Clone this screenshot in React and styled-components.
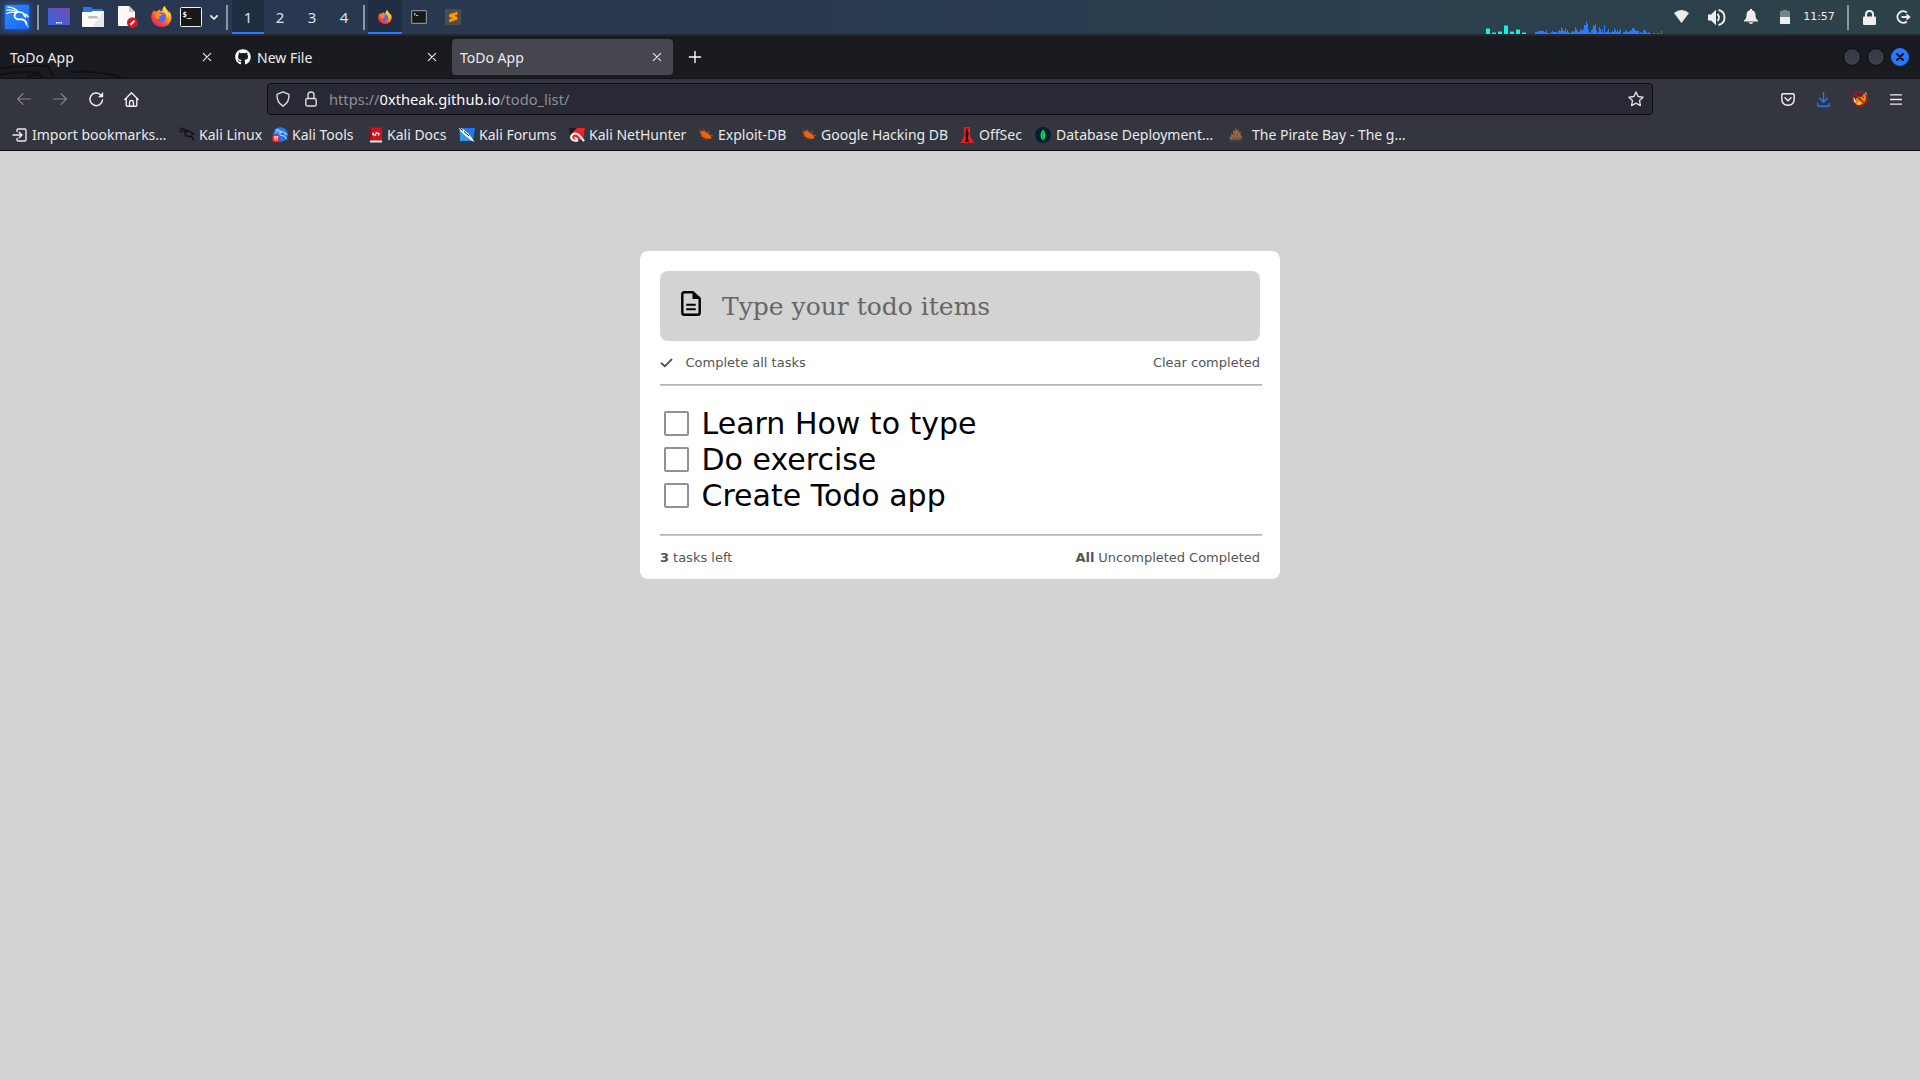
import React from 'react';
import styled, { createGlobalStyle } from 'styled-components';
import { SiSublimetext } from 'react-icons/si';
import { FaGithub } from 'react-icons/fa';

const GlobalStyle = createGlobalStyle`
  * { box-sizing: border-box; }
  body {
    margin: 0;
    background: #d3d3d3;
    overflow: hidden;
    font-family: "Noto Sans", sans-serif;
  }
  svg { display: block; overflow: visible; }
`;

const Screen = styled.div`
  display: flex;
  flex-direction: column;
  width: 1920px;
  height: 1080px;
`;

/* ---------- desktop panel ---------- */

const Panel = styled.header`
  display: flex;
  align-items: center;
  justify-content: space-between;
  height: 34px;
  flex: none;
  background: linear-gradient(90deg, #28374f 0%, #28394f 40%, #2b3f4d 75%, #2e4249 100%);
`;

const PanelGroup = styled.div`
  display: flex;
  align-items: center;
  height: 34px;
`;

const Slot = styled.div`
  display: flex;
  align-items: center;
  justify-content: center;
  flex: none;
  width: ${(p) => p.$w}px;
  height: 100%;
  padding-bottom: ${(p) => p.$lift || 0}px;
  color: #eeeeec;
`;

const Separator = styled.div`
  flex: none;
  width: 2px;
  height: 25px;
  background: #8e96a1;
`;

const KaliTile = styled.div`
  display: flex;
  align-items: center;
  justify-content: center;
  width: 24px;
  height: 24px;
  background: linear-gradient(140deg, #2190ff, #1f66ff);
  box-shadow: 0 0 5px 1px rgba(39, 119, 255, 0.65);
`;

const Workspace = styled.div`
  display: flex;
  align-items: center;
  justify-content: center;
  flex: none;
  width: ${(p) => p.$w || 32}px;
  height: 34px;
  padding-top: 1px;
  font-size: 15px;
  color: #dfe2e6;
  background: ${(p) => (p.$active ? '#202e41' : 'transparent')};
  border-bottom: 2px solid ${(p) => (p.$active ? '#277bff' : 'transparent')};
`;

const Graph = styled.div`
  display: flex;
  align-items: flex-end;
  gap: ${(p) => p.$gap}px;
  width: ${(p) => p.$w}px;
  height: 34px;
  margin-right: ${(p) => p.$after}px;
`;

const Bar = styled.div`
  flex: none;
  width: ${(p) => p.$w}px;
  background: ${(p) => p.$color};
  border-top: ${(p) => (p.$cap ? '1px solid #188f94' : '0')};
`;

const Clock = styled.div`
  font: 11px "DejaVu Sans", sans-serif;
  color: #eeeeec;
  padding-bottom: 2px;
`;

/* ---------- browser chrome ---------- */

const TabBar = styled.div`
  position: relative;
  display: flex;
  align-items: center;
  justify-content: space-between;
  flex: none;
  height: 45px;
  padding-bottom: 1px;
  background: #1a1b20;
  border-top: 2px solid #26282e;
  border-bottom: 1px solid #121318;
`;

const Watermark = styled.div`
  position: absolute;
  left: 0;
  bottom: 0;
`;

const TabStrip = styled.div`
  position: relative;
  display: flex;
  align-items: center;
`;

const Tab = styled.div`
  display: flex;
  align-items: center;
  width: ${(p) => p.$w}px;
  height: 36px;
  margin-right: ${(p) => p.$after}px;
  padding: 0 ${(p) => p.$end || 11}px 0 ${(p) => p.$pad}px;
  gap: 6px;
  border-radius: 4px;
  color: #ececee;
  font-size: 14px;
  background: ${(p) => (p.$active ? '#46464f' : 'transparent')};
`;

const TabLabel = styled.span`
  flex: 1;
  padding-top: 1px;
  white-space: nowrap;
`;

const WindowControls = styled.div`
  display: flex;
  gap: 6px;
  margin-right: 11px;
`;

const WindowButton = styled.div`
  display: flex;
  align-items: center;
  justify-content: center;
  width: 18px;
  height: 18px;
  border-radius: 50%;
  background: ${(p) => (p.$close ? '#2777ff' : 'linear-gradient(#343945, #3b404d)')};
  border: 1px solid ${(p) => (p.$close ? '#2777ff' : '#07080b')};
`;

const NavBar = styled.div`
  display: flex;
  align-items: center;
  flex: none;
  height: 40px;
  background: #33353f;
`;

const UrlBar = styled.div`
  display: flex;
  align-items: center;
  flex: none;
  width: 1386px;
  height: 32px;
  border: 1px solid #0d0e13;
  border-radius: 4px;
  background: #282934;
`;

const UrlText = styled.div`
  flex: 1;
  font-size: 14.67px;
  color: #8e8f97;
  white-space: nowrap;
  b { font-weight: 400; color: #fbfbfe; }
`;

const BookmarkBar = styled.div`
  display: flex;
  align-items: center;
  flex: none;
  height: 32px;
  padding-left: 11px;
  background: #33353f;
  border-bottom: 1px solid #0d0e13;
`;

const Bookmark = styled.div`
  display: flex;
  align-items: center;
  flex: none;
  width: ${(p) => p.$w}px;
  gap: ${(p) => p.$gap || 5}px;
  font-size: 14px;
  line-height: 20px;
  color: #e8e8ea;
  white-space: nowrap;
`;

/* ---------- todo page ---------- */

const Page = styled.main`
  flex: 1;
  display: flex;
  justify-content: center;
  align-items: flex-start;
  padding-top: 100px;
  background: #d3d3d3;
  font-family: "DejaVu Sans", sans-serif;
`;

const Card = styled.section`
  display: flex;
  flex-direction: column;
  width: 640px;
  height: 328px;
  padding: 20px;
  border-radius: 8px;
  background: #fff;
`;

const TodoInput = styled.div`
  display: flex;
  align-items: center;
  flex: none;
  height: 70px;
  padding-left: 21px;
  gap: 21px;
  border-radius: 8px;
  background: #d3d3d3;
`;

const Placeholder = styled.span`
  font: 25px "DejaVu Serif", serif;
  color: #666;
  padding-top: 1px;
`;

const DocIcon = styled.div`
  padding-bottom: 5px;
`;

const Row = styled.div`
  display: flex;
  align-items: center;
  justify-content: space-between;
  flex: none;
  height: 43px;
  font-size: 13px;
  color: #555;
`;

const RowGroup = styled.div`
  display: flex;
  align-items: center;
  gap: ${(p) => p.$gap}px;
`;

const Rule = styled.div`
  flex: none;
  width: 602px;
  height: 2px;
  border-top: 1px solid #b5b5b5;
  border-bottom: 1px solid #c9c9c9;
`;

const TodoList = styled.div`
  flex: none;
  height: 148px;
  padding: 20px 0 0 4px;
`;

const Todo = styled.div`
  display: flex;
  align-items: flex-start;
  gap: 12.5px;
  height: 36px;
  font-size: 30px;
  line-height: 36px;
  color: #000;
  white-space: nowrap;
`;

const Checkbox = styled.div`
  width: 25px;
  height: 25px;
  margin-top: 5px;
  border: 2px solid #8f8f9d;
  border-radius: 2px;
  background: #fff;
`;

/* ---------- icons ---------- */

const Line = ({ w = 16, h = 16, sw = 1.3, children, color = 'currentColor' }) => (
  <svg width={w} height={h} viewBox={`0 0 ${w} ${h}`} fill="none" stroke={color}
    strokeWidth={sw} strokeLinecap="round" strokeLinejoin="round">{children}</svg>
);

const Dragon = ({ size, color, ...rest }) => (
  <svg width={size} height={size} viewBox="0 0 24 24" fill="none" stroke={color}
    strokeLinecap="round" strokeLinejoin="round" {...rest}>
    <path d="M2 1.200Q8.500 1.200 13 6.200M1 4.300Q7 3 12.300 6.500M1 7.800Q5 5.300 10 7" strokeWidth="1.300" />
    <path d="M12 6.300Q8 8.500 9.200 11.500 10.500 14.300 15.500 13.800 20.500 14 21.300 18.500" strokeWidth="1.900" />
    <path d="M21.300 18.300Q21.500 20.500 23 21.800" strokeWidth="1" />
    <path d="M12 6.300Q16.500 5.800 18.800 8.300 21.800 8.700 23 11.200M18.500 8.800Q18.500 10.500 20.500 11.500" strokeWidth="1.600" />
  </svg>
);

const DesktopIcon = () => (
  <svg width="22" height="17" viewBox="0 0 22 17">
    <defs>
      <linearGradient id="desk" x1="0" y1="1" x2="1" y2="0">
        <stop offset="0" stopColor="#2d68de" /><stop offset="1" stopColor="#7d49b2" />
      </linearGradient>
    </defs>
    <rect width="22" height="17" rx=".6" fill="url(#desk)" />
    <path d="M8 14h1.500v1.500H8zM10.300 14h1.500v1.500h-1.500zM12.600 14h1.500v1.500h-1.500z" fill="#fff" />
  </svg>
);

const FolderIcon = () => (
  <svg width="22" height="20" viewBox="0 0 22 20">
    <path d="M1 1q0-1 1-1h7l2 2h9q1 0 1 1v5H1z" fill="#2a74e8" />
    <path d="M0 5h9l2-1h11v15q0 1-1 1H1q-1 0-1-1z" fill="#fafafa" />
    <path d="M22 4v15q0 1-1 1H10z" fill="#e9e9e9" />
    <rect x="6" y="9" width="10" height="2.400" rx="1.200" fill="#bdbdbd" />
  </svg>
);

const DocBlockedIcon = () => (
  <svg width="20" height="22" viewBox="0 0 20 22">
    <path d="M0 1q0-1 1-1h10l6 6v13q0 1-1 1H1q-1 0-1-1z" fill="#fafafa" />
    <path d="M11 0l6 6h-6z" fill="#c9c9c9" />
    <circle cx="14.500" cy="16.700" r="5.500" fill="#d41920" />
    <path d="M12.500 18.700l4-4" stroke="#fff" strokeWidth="2" />
  </svg>
);

const FirefoxIcon = ({ size, id }) => (
  <svg width={size} height={size} viewBox="0 0 21 21">
    <defs>
      <linearGradient id={`${id}a`} x1=".85" y1=".1" x2=".2" y2=".95">
        <stop offset="0" stopColor="#fff044" /><stop offset=".35" stopColor="#ffa02c" />
        <stop offset=".65" stopColor="#ff5038" /><stop offset="1" stopColor="#e62160" />
      </linearGradient>
      <linearGradient id={`${id}b`} x1="0" y1="0" x2="0" y2="1">
        <stop offset="0" stopColor="#7a5be0" /><stop offset="1" stopColor="#2f7bf0" />
      </linearGradient>
    </defs>
    <path d="M3.2 4Q3.400 5.300 4 5.700Q5.200 5 6.800 5Q7.800 3.600 9.500 3.500Q8.700 5 9.500 5.600Q12 4.500 11.700 2.500Q12.200 .6 14 0Q14.200 2.300 16.500 4.200Q17.500 5 18 7L18.300 5.600Q20.800 8 20.500 12Q19.500 20.500 10.700 21Q1 20.500 .2 11.500Q.2 7 3.200 4z" fill={`url(#${id}a)`} />
    <circle cx="10.500" cy="11.200" r="4.800" fill={`url(#${id}b)`} />
    <path d="M4 7.500Q6 6 8.500 7.300L11.500 8.300Q11 9.800 8.700 10Q8 11.500 8.300 12.800Q6 13.500 4.800 12Q3.500 9.500 4 7.500z" fill="#ff8a1e" />
    <path d="M12 4.500Q16.500 7.500 15.500 12.500Q18 10 16.500 6.200Q14 4 14 2z" fill="#ffd83a" opacity=".85" />
  </svg>
);

const TerminalIcon = () => (
  <svg width="22" height="20" viewBox="0 0 22 20">
    <rect x=".5" y=".5" width="21" height="19" rx="1" fill="#17181a" stroke="#f0f0f0" />
    <text x="2.500" y="9.500" fontFamily="DejaVu Sans Mono, monospace" fontWeight="700" fontSize="7.5" fill="#fff">$_</text>
  </svg>
);

const TerminalTaskIcon = () => (
  <svg width="16" height="14" viewBox="0 0 16 14">
    <rect x=".6" y=".6" width="14.800" height="12.800" rx="1" fill="#17181a" stroke="#8c8c8c" strokeWidth="1.200" />
    <path d="M3 3l1.500 1.200L3 5.400M5.200 5.500h2" stroke="#eee" strokeWidth=".9" fill="none" />
  </svg>
);

const SublimeIcon = () => (
  <svg width="16" height="16" viewBox="0 0 16 16">
    <rect width="16" height="16" rx="1" fill="#4d4d4d" />
    <SiSublimetext x="3" y="2.800" size={10.5} color="#ff9800" />
  </svg>
);

const WifiIcon = () => (
  <svg width="15" height="13" viewBox="0 0 15 13"><path d="M0 3Q7.500-3 15 3L7.500 13z" fill="#eeeeec" /></svg>
);

const SpeakerIcon = () => (
  <svg width="18" height="17" viewBox="0 0 18 17">
    <path d="M0 5.500h3L8 .7v15.600L3 11.500H0z" fill="#eeeeec" />
    <path d="M9.500 5q3.200 3.500 0 7" stroke="#eeeeec" strokeWidth="1.900" fill="none" />
    <path d="M10.500 1q6 1.300 6 7.500t-6 7.500" stroke="#eeeeec" strokeWidth="1.900" fill="none" />
  </svg>
);

const BellIcon = () => (
  <svg width="14" height="15" viewBox="0 0 14 15">
    <path d="M6 0h2v1.300q3.500.7 3.500 4.700 0 4 2.500 5.500v1H0v-1Q2.500 10 2.500 6 2.500 2 6 1.300z" fill="#eeeeec" />
    <path d="M4.500 13.300h5q-.8 1.700-2.500 1.700t-2.500-1.700z" fill="#eeeeec" />
  </svg>
);

const BatteryIcon = () => (
  <svg width="10" height="14" viewBox="0 0 10 14">
    <path d="M2.500 0h5v1H10v6H0V1h2.500z" fill="#76838b" /><path d="M0 7h10v7H0z" fill="#eeeeec" />
  </svg>
);

const PanelLockIcon = () => (
  <svg width="13" height="15" viewBox="0 0 13 15">
    <path d="M3 7V4.500Q3 1 6.500 1T10 4.500V7" stroke="#eeeeec" strokeWidth="2" fill="none" />
    <rect y="6.500" width="13" height="8.500" rx="1" fill="#eeeeec" />
  </svg>
);

const LogoutIcon = () => (
  <svg width="15" height="14" viewBox="0 0 15 14">
    <path d="M10.800 2.600A5.700 5.700 0 1 0 10.800 11.400" stroke="#eeeeec" strokeWidth="2" fill="none" />
    <path d="M5.500 6h5V3.500L14.800 7l-4.300 3.500V8h-5z" fill="#eeeeec" />
  </svg>
);

const CloseIcon = () => <Line w={8} h={8} sw={1.1}><path d="M.3.3l7.400 7.400M7.700.3L.3 7.700" /></Line>;

const BackIcon = ({ flip }) => (
  <Line w={14} h={12} sw={1.2} color="#83848c">
    <g transform={flip ? 'translate(14 0) scale(-1 1)' : undefined}><path d="M13.700 6H.6M6 .6L.6 6 6 11.400" /></g>
  </Line>
);

const ReloadIcon = () => (
  <svg width="15" height="15" viewBox="0 0 15 15">
    <path d="M11.500 2.700A6.300 6.300 0 1 0 13.500 8" fill="none" stroke="#f0f0f4" strokeWidth="1.500" strokeLinecap="round" />
    <path d="M14.200 0v5.200H9z" fill="#f0f0f4" />
  </svg>
);

const HomeIcon = () => (
  <Line w={15} h={15} sw={1.4} color="#f0f0f4">
    <path d="M.8 7.500L7.500.8l6.700 6.700M2.200 6.500v6.700q0 1 1 1h8.600q1 0 1-1V6.500M5.600 14V10q0-1.500 1.900-1.500T9.400 10v4" />
  </Line>
);

const ShieldIcon = () => (
  <Line w={14} h={16} sw={1.4} color="#dcdce0"><path d="M7 .8l6 2.500q.5 8-6 11.900Q.5 11.300 1 3.300z" /></Line>
);

const LockIcon = () => (
  <Line w={12} h={16} sw={1.4} color="#dcdce0"><path d="M3 7.500V4Q3 1 6 1t3 3v3.500" /><rect x=".8" y="7.500" width="10.400" height="7.500" rx="1.500" /></Line>
);

const StarIcon = () => (
  <Line w={16} h={16} sw={1.4} color="#dcdce0"><path d="M8 1l2.100 4.500 5 .7-3.600 3.400.9 5L8 12.200l-4.400 2.400.9-5L.9 6.200l5-.7z" /></Line>
);

const PocketIcon = () => (
  <Line w={14} h={13} sw={1.4} color="#f0f0f4"><path d="M2 .8h10q1.200 0 1.200 1.200v4q0 6-6.200 6.300Q.8 12 .8 6V2Q.8.8 2 .8zM4 4.700l3 3 3-3" /></Line>
);

const DownloadIcon = () => (
  <Line w={13} h={15} sw={1.4} color="#2777ff"><path d="M6.500.5v9.800M2.500 6.300l4 4 4-4M.6 11.500v1q0 1.800 1.700 1.800h8.400q1.700 0 1.700-1.800v-1" /></Line>
);

const FoxBlockedIcon = () => (
  <svg width="16" height="16" viewBox="0 0 16 16">
    <path d="M2.500 9.500l3.500-4 3.500.5 3-4 2 3-1 5-3 3.500-6.500.5z" fill="#e8820c" />
    <path d="M1 6l1.500 1L4 12l-2-1zM12 3l2-2 1 4z" fill="#f4e4cc" />
    <path d="M4.500 12l2.500-1.500L9.500 12 7 14.500z" fill="#f8c17c" />
    <path d="M6.500 8l2 .5M10.500 6.500l1.500-.5" stroke="#5a2c08" strokeWidth="1" />
    <circle cx="8" cy="8" r="7.300" fill="none" stroke="#c40d0d" strokeWidth="1.200" />
    <path d="M3 3l10 10" stroke="#c40d0d" strokeWidth="1.200" />
  </svg>
);

const MenuIcon = () => (
  <svg width="12" height="11" viewBox="0 0 12 11"><path d="M0 .8h12M0 5.500h12M0 10.200h12" stroke="#f0f0f4" strokeWidth="1.300" /></svg>
);

const ImportIcon = () => (
  <Line sw={1.4} color="#ececef"><path d="M6 4.500V3.200Q6 2 7.200 2h6.600Q15 2 15 3.200v9.600q0 1.200-1.200 1.200H7.200Q6 14 6 12.800v-1.300M2 8h9M8.200 5.200L11 8 8.200 10.800" /></Line>
);

const KaliToolsIcon = () => (
  <svg width="16" height="16" viewBox="0 0 16 16">
    <circle cx="8.500" cy="7.500" r="7.300" fill="#2478f0" />
    <Dragon x="3" y="1.500" size={12.5} color="#cfe4ff" />
    <circle cx="4" cy="11.500" r="3.900" fill="#e32530" />
    <path d="M1.800 9.900h4.600M3 10v3.500M5.200 10v3.500" stroke="#fff" strokeWidth="1" />
  </svg>
);

const KaliDocsIcon = () => (
  <svg width="16" height="16" viewBox="0 0 16 16">
    <rect x="2" y=".5" width="12" height="13" fill="#d5111b" /><rect x="2" y=".5" width="1.600" height="13" fill="#a40a12" />
    <path d="M2 13.500h12v2H2z" fill="#eee" />
    <path d="M5.500 5.500l-.7 2 2.700.8.8-2.500 2.700.6-.5 2.300" stroke="#fff" strokeWidth="1.200" fill="none" />
  </svg>
);

const KaliForumsIcon = () => (
  <svg width="16" height="16" viewBox="0 0 16 16">
    <path d="M2 1h14l-2 13H1z" fill="#2078ee" /><path d="M.5 2l4 3L10 14H1z" fill="#2f9bf0" />
    <path d="M0 1l3.500.8L9 6l3.500 4.500L15.500 15l-5-2.500L5 7.500 2 5z" fill="#fff" />
    <path d="M1 1.500l3 2M5 4.500l5 4.500" stroke="#20242e" strokeWidth="1" />
  </svg>
);

const NetHunterIcon = () => (
  <svg width="16" height="16" viewBox="0 0 16 16">
    <path d="M2 1h14l-2 12H3z" fill="#e8242b" /><path d="M0 1h8L1 8z" fill="#25181c" />
    <path d="M15 14.200Q12 10 9.500 7.800 6.500 5.200 3.500 7.500 1 10 3 12.500 5.500 14.500 9 13.300" stroke="#fff" strokeWidth="2" fill="none" />
    <path d="M5.500 10.500l3 1.500" stroke="#fff" strokeWidth="1.400" />
  </svg>
);

const ExploitIcon = () => (
  <svg width="16" height="16" viewBox="0 0 16 16">
    <path d="M2.500 5Q5 2.500 9 5.500q4 2.500 4.500 6Q9 12.500 5.500 10.500 2.500 8.500 2.500 5z" fill="#f2600c" />
    <path d="M1 5.500h3M1.500 2.500l3 2.500M5.500 1.800l2 3.500M2.500 9.500L5 8.500M5 12.500l2-2M9.500 4l2.500 1.500M12 8l3.500 1M8 13l1.500-1.500" stroke="#c65316" strokeWidth=".8" />
  </svg>
);

const OffSecIcon = () => (
  <svg width="16" height="16" viewBox="0 0 16 16">
    <path d="M5 0h6v8l4 8H1.500L5 9z" fill="#df1f26" />
    <path d="M7.300 1.500h1.400v3l1 1.500-1 5 1.300 4H6L7.300 11l-1-5 1-1.500z" fill="#220a0e" />
  </svg>
);

const MongoIcon = () => (
  <svg width="16" height="16" viewBox="0 0 16 16">
    <circle cx="8" cy="8" r="8" fill="#04202f" />
    <path d="M8 2.500Q13.200 8.500 8 13.500 2.800 8.500 8 2.500z" fill="#08e864" />
    <path d="M8 5v8.500" stroke="#0a6b45" strokeWidth=".8" />
  </svg>
);

const PirateIcon = () => (
  <svg width="16" height="16" viewBox="0 0 16 16">
    <path d="M2 12.500l-.5-3 2 .5-.5-4 2 1.500L5 3l2 2 .5-4.500L9 4l1.500-2 .5 4 1.500-2v4l1.500 1-1 3.500z" fill="#9b6b4b" />
    <path d="M1.500 14h13M4 11h9M6 6v4M9.500 6v4" stroke="#634736" strokeWidth=".9" />
  </svg>
);

const PageIcon = () => (
  <svg width="20" height="25" viewBox="0 0 20 25">
    <path d="M12 1.300H3.300Q1.300 1.300 1.300 3.300v18.400q0 2 2 2h13.400q2 0 2-2V7.500z" fill="none" stroke="#000" strokeWidth="2.400" strokeLinejoin="round" />
    <path d="M11.500 1v7h7.700z" fill="#000" />
    <path d="M5.300 13.800h9.400M5.300 18.200h9.400" stroke="#000" strokeWidth="2.100" />
  </svg>
);

/* ---------- data ---------- */

const CYAN = [6, 2, 3, 9, 3, 5, 2];
const BLUE = [2,2,2,3,3,3,3,3,3,2,2,4,1,1,1,0,2,3,2,2,2,2,1,3,4,3,7,5,3,3,6,2,4,2,1,1,2,3,2,3,7,5,3,2,2,4,5,3,5,9,9,13,10,4,2,1,4,5,9,8,10,4,1,2,7,5,2,5,1,9,2,2,3,5,2,1,2,3,2,6,4,2,4,2,3,5,0,0,2,2,3,4,2,2,3,3,4,6,6,5,4,3,3,3,1,2,1,1,3,5,3,2,1,2,1,1,0,0,1,1,0,0,1,1,0,0,3];

const BOOKMARKS = [
  { label: 'Import bookmarks…', w: 168, icon: <ImportIcon /> },
  { label: 'Kali Linux', w: 93, gap: 4, icon: <Dragon size={16} color="#0c0d11" /> },
  { label: 'Kali Tools', w: 96, gap: 4, icon: <KaliToolsIcon /> },
  { label: 'Kali Docs', w: 91, gap: 3, icon: <KaliDocsIcon /> },
  { label: 'Kali Forums', w: 110, gap: 4, icon: <KaliForumsIcon /> },
  { label: 'Kali NetHunter', w: 129, gap: 4, icon: <NetHunterIcon /> },
  { label: 'Exploit-DB', w: 103, gap: 4, icon: <ExploitIcon /> },
  { label: 'Google Hacking DB', w: 158, gap: 4, icon: <ExploitIcon /> },
  { label: 'OffSec', w: 76, gap: 4, icon: <OffSecIcon /> },
  { label: 'Database Deployment…', w: 193, gap: 5, icon: <MongoIcon /> },
  { label: 'The Pirate Bay - The g…', w: 190, gap: 8, icon: <PirateIcon /> },
];

const TODOS = ['Learn How to type', 'Do exercise', 'Create Todo app'];

export default function App() {
  return (
    <Screen>
      <GlobalStyle />
      <Panel>
        <PanelGroup>
          <Slot $w={34}><KaliTile><Dragon size={23} color="#fff" /></KaliTile></Slot>
          <Slot $w={8}><Separator /></Slot>
          <Slot $w={34} $lift={1}><DesktopIcon /></Slot>
          <Slot $w={34}><FolderIcon /></Slot>
          <Slot $w={36}><DocBlockedIcon /></Slot>
          <Slot $w={30} $lift={1}><FirefoxIcon size={21} id="ffl" /></Slot>
          <Slot $w={30}><TerminalIcon /></Slot>
          <Slot $w={16}><Line w={8} h={5} sw={1.7}><path d="M.8.8L4 4 7.200.8" /></Line></Slot>
          <Slot $w={10}><Separator /></Slot>
          <Workspace $active>1</Workspace>
          <Workspace>2</Workspace>
          <Workspace>3</Workspace>
          <Workspace>4</Workspace>
          <Slot $w={8}><Separator /></Slot>
          <Workspace $active $w={34}><FirefoxIcon size={14} id="ffs" /></Workspace>
          <Slot $w={34}><TerminalTaskIcon /></Slot>
          <Slot $w={34}><SublimeIcon /></Slot>
        </PanelGroup>
        <PanelGroup>
          <Graph $gap={2} $w={40} $after={9}>
            {CYAN.map((h, i) => <Bar key={i} $w={4} $color="#0ff5e0" $cap style={{ height: h }} />)}
          </Graph>
          <Graph $gap={0} $w={127} $after={-7}>
            {BLUE.map((h, i) => <Bar key={i} $w={1} $color="#277bff" style={{ height: h }} />)}
          </Graph>
          <Slot $w={52} $lift={1}><WifiIcon /></Slot>
          <Slot $w={19}><SpeakerIcon /></Slot>
          <Slot $w={50} $lift={1}><BellIcon /></Slot>
          <Slot $w={18}><BatteryIcon /></Slot>
          <Slot $w={50}><Clock>11:57</Clock></Slot>
          <Slot $w={8}><Separator /></Slot>
          <Slot $w={35}><PanelLockIcon /></Slot>
          <Slot $w={33}><LogoutIcon /></Slot>
        </PanelGroup>
      </Panel>

      <TabBar>
        <Watermark>
          <svg width="140" height="13" viewBox="0 0 140 13" fill="none" stroke="#101116" strokeWidth="2">
            <path d="M0 4Q20 0 48 1l6 12M0 10q20-5 38-2l4 5M70 7q30-2 52 6M26 12l14-3" />
          </svg>
        </Watermark>
        <TabStrip>
          <Tab $w={221} $pad={10} $end={10} $after={4}><TabLabel>ToDo App</TabLabel><CloseIcon /></Tab>
          <Tab $w={222} $pad={10} $after={5}><FaGithub size={16} color="#fff" /><TabLabel>New File</TabLabel><CloseIcon /></Tab>
          <Tab $w={221} $pad={8} $end={12} $after={16} $active><TabLabel>ToDo App</TabLabel><CloseIcon /></Tab>
          <Line w={12} h={12} sw={1.4} color="#fbfbfe"><path d="M6 .4v11.200M.4 6h11.200" /></Line>
        </TabStrip>
        <WindowControls>
          <WindowButton />
          <WindowButton />
          <WindowButton $close><Line w={8} h={8} sw={2} color="#101218"><path d="M1 1l6 6M7 1L1 7" /></Line></WindowButton>
        </WindowControls>
      </TabBar>

      <NavBar>
        <Slot $w={48}><BackIcon /></Slot>
        <Slot $w={24}><BackIcon flip /></Slot>
        <Slot $w={48}><ReloadIcon /></Slot>
        <Slot $w={23}><HomeIcon /></Slot>
        <Slot $w={124} />
        <UrlBar>
          <Slot $w={30}><ShieldIcon /></Slot>
          <Slot $w={26}><LockIcon /></Slot>
          <Slot $w={5} />
          <UrlText>https://<b>0xtheak.github.io</b>/todo_list/</UrlText>
          <Slot $w={32}><StarIcon /></Slot>
        </UrlBar>
        <Slot $w={117} />
        <Slot $w={36}><PocketIcon /></Slot>
        <Slot $w={35}><DownloadIcon /></Slot>
        <Slot $w={37}><FoxBlockedIcon /></Slot>
        <Slot $w={36}><MenuIcon /></Slot>
      </NavBar>

      <BookmarkBar>
        {BOOKMARKS.map((b) => (
          <Bookmark key={b.label} $w={b.w} $gap={b.gap}>{b.icon}<span>{b.label}</span></Bookmark>
        ))}
      </BookmarkBar>

      <Page>
        <Card>
          <TodoInput>
            <DocIcon><PageIcon /></DocIcon>
            <Placeholder>Type your todo items</Placeholder>
          </TodoInput>
          <Row>
            <RowGroup $gap={12.5}>
              <Line w={13} h={10} sw={1.9}><path d="M1.500 5.300l3.300 3L11.500 1.500" /></Line>
              <span>Complete all tasks</span>
            </RowGroup>
            <span>Clear completed</span>
          </Row>
          <Rule />
          <TodoList>
            {TODOS.map((t) => <Todo key={t}><Checkbox />{t}</Todo>)}
          </TodoList>
          <Rule />
          <Row>
            <RowGroup $gap={4}><b>3</b><span>tasks left</span></RowGroup>
            <RowGroup $gap={4}><b>All</b><span>Uncompleted</span><span>Completed</span></RowGroup>
          </Row>
        </Card>
      </Page>
    </Screen>
  );
}
